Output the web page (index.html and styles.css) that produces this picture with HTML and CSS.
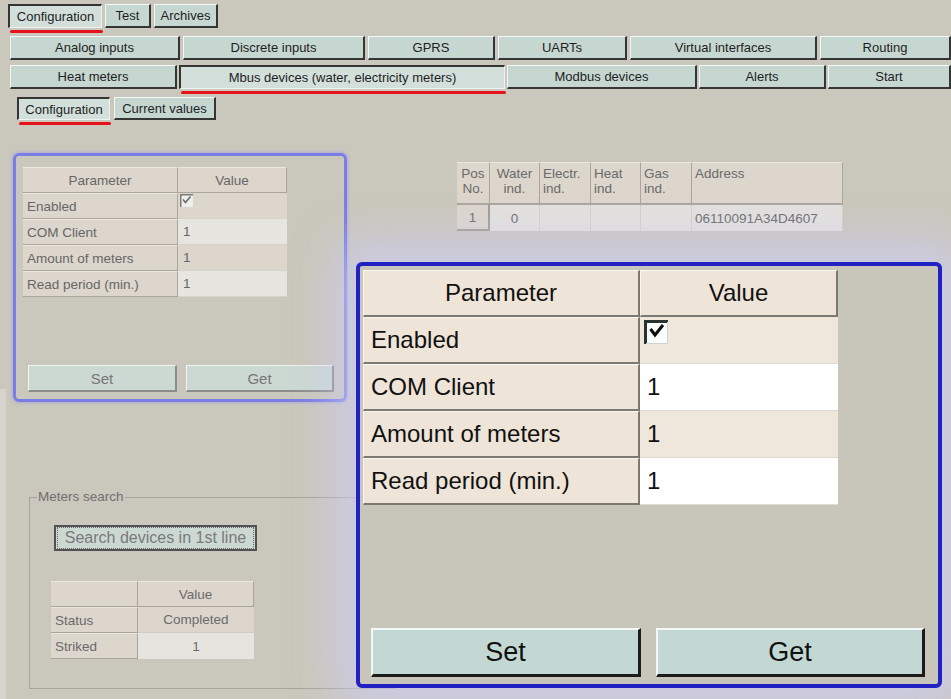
FILE: index.html
```html
<!DOCTYPE html>
<html lang="en">
<head>
<meta charset="utf-8">
<title>Mbus devices — Configuration</title>
<link rel="stylesheet" href="styles.css">
</head>
<body>
<div class="app">
  <nav class="tabs tabs-top">
    <div class="tab active">Configuration</div>
    <div class="tab">Test</div>
    <div class="tab">Archives</div>
  </nav>

  <nav class="nav nav-a">
    <div class="tab">Analog inputs</div>
    <div class="tab">Discrete inputs</div>
    <div class="tab">GPRS</div>
    <div class="tab">UARTs</div>
    <div class="tab">Virtual interfaces</div>
    <div class="tab">Routing</div>
  </nav>
  <nav class="nav nav-b">
    <div class="tab">Heat meters</div>
    <div class="tab active">Mbus devices (water, electricity meters)</div>
    <div class="tab">Modbus devices</div>
    <div class="tab">Alerts</div>
    <div class="tab">Start</div>
  </nav>

  <nav class="tabs tabs-sub">
    <div class="tab active">Configuration</div>
    <div class="tab">Current values</div>
  </nav>

  <main class="workspace">
    <div class="left-col">
      <section class="panel panel-mini">
        <table class="params params-mini">
          <colgroup><col class="c-key"><col class="c-val"></colgroup>
          <thead><tr><th>Parameter</th><th>Value</th></tr></thead>
          <tbody>
            <tr><td class="key">Enabled</td><td class="val beige top">
              <svg class="check check-mini" viewBox="0 0 13 13"><rect width="13" height="13" fill="#eeeeea"/><path d="M0.75 13V0.75H13" stroke="#7c7c78" stroke-width="1.5" fill="none"/><path d="M3 5.5l2.5 3 5-6" stroke="#6a6a6a" stroke-width="1.6" fill="none"/></svg>
            </td></tr>
            <tr><td class="key">COM Client</td><td class="val light">1</td></tr>
            <tr><td class="key">Amount of meters</td><td class="val beige">1</td></tr>
            <tr><td class="key">Read period (min.)</td><td class="val light">1</td></tr>
          </tbody>
        </table>
        <div class="actions actions-mini">
          <button class="btn-mini">Set</button>
          <button class="btn-mini">Get</button>
        </div>
      </section>

      <fieldset class="search">
        <legend>Meters search</legend>
        <button class="search-btn"><span>Search devices in 1st line</span></button>
        <table class="status">
          <colgroup><col class="s-key"><col class="s-val"></colgroup>
          <thead><tr><th></th><th>Value</th></tr></thead>
          <tbody>
            <tr><td class="key">Status</td><td class="val beige">Completed</td></tr>
            <tr><td class="key">Striked</td><td class="val light">1</td></tr>
          </tbody>
        </table>
      </fieldset>
    </div>

    <table class="meters">
      <colgroup>
        <col class="m-pos"><col class="m-w"><col class="m-e"><col class="m-h"><col class="m-g"><col class="m-addr">
      </colgroup>
      <thead>
        <tr>
          <th class="center">Pos<br>No.</th>
          <th class="center">Water<br>ind.</th>
          <th>Electr.<br>ind.</th>
          <th>Heat<br>ind.</th>
          <th>Gas<br>ind.</th>
          <th>Address</th>
        </tr>
      </thead>
      <tbody>
        <tr>
          <td class="rowhead">1</td>
          <td class="center">0</td>
          <td></td>
          <td></td>
          <td></td>
          <td>06110091A34D4607</td>
        </tr>
      </tbody>
    </table>

    <!-- enlarged view of the configuration block -->
    <section class="panel panel-zoom">
      <table class="params params-zoom">
        <colgroup><col class="z-key"><col class="z-val"></colgroup>
        <thead><tr><th>Parameter</th><th>Value</th></tr></thead>
        <tbody>
          <tr><td class="key">Enabled</td><td class="val beige top">
            <svg class="check check-zoom" viewBox="0 0 24 24"><rect width="24" height="24" fill="#fbfdfc"/><path d="M1.5 24V1.5H24" stroke="#28332f" stroke-width="3" fill="none"/><path d="M23.5 2v21.5H2" stroke="#c7d6d1" stroke-width="1" fill="none"/><path d="M6.5 9l4.5 6 8-10" stroke="#0d0d0d" stroke-width="3" fill="none"/></svg>
          </td></tr>
          <tr><td class="key">COM Client</td><td class="val white">1</td></tr>
          <tr><td class="key">Amount of meters</td><td class="val beige">1</td></tr>
          <tr><td class="key">Read period (min.)</td><td class="val white">1</td></tr>
        </tbody>
      </table>
      <div class="actions actions-zoom">
        <button class="btn-zoom">Set</button>
        <button class="btn-zoom">Get</button>
      </div>
    </section>
  </main>
</div>
</body>
</html>
```
FILE: styles.css
```css
html, body {
  margin: 0;
  padding: 0;
}

body {
  width: 951px;
  height: 699px;
  overflow: hidden;
  background-color: #cac7bc;
  /* pale window edge along the lower left */
  background-image: linear-gradient(#d6d4cc, #d6d4cc);
  background-size: 6px 310px;
  background-position: left bottom;
  background-repeat: no-repeat;
  font-family: "Liberation Sans", Arial, sans-serif;
  color: #222;
}

.app {
  padding-top: 4px;
}

/* ---------- tabs and navigation buttons ---------- */

.tab {
  position: relative;
  display: flex;
  align-items: center;
  justify-content: center;
  box-sizing: border-box;
  font-size: 13px;
  color: #1e1e1e;
  white-space: nowrap;
  background: #c6d7d1;
  border-style: solid;
  border-width: 1px 2px 2px 1px;
  border-color: #f3f7f5 #353535 #353535 #f3f7f5;
}

.tab.active {
  background: #d3dfdb;
  border-width: 2px 1px 1px 2px;
  border-color: #353535 #eef3f1 #eef3f1 #353535;
}

.tab.active::after {
  content: "";
  position: absolute;
  left: 0;
  right: -2px;
  bottom: -6px;
  height: 3px;
  border-radius: 2px;
  background: #e5121b;
}

.tabs {
  display: grid;
}

.tabs-top {
  grid-template-columns: 94px 46px 64px;
  gap: 3px;
  height: 24px;
  margin-left: 8px;
}

.nav {
  display: grid;
  height: 24px;
  margin-left: 10px;
}

.nav-a {
  margin-top: 8px;
  gap: 3px;
  grid-template-columns: 170px 182px 127px 129px 187px 1fr;
}

.nav-b {
  margin-top: 5px;
  gap: 2px;
  grid-template-columns: 167px 326px 190px 127px 1fr;
}

.tabs-sub {
  margin-top: 8px;
  margin-left: 17px;
  height: 23px;
  gap: 4px;
  grid-template-columns: 93px 102px;
}

/* ---------- workspace ---------- */

.workspace {
  position: relative;
  display: flex;
  align-items: flex-start;
  gap: 62px;
  margin-top: 5px;
  padding-left: 13px;
  height: 574px;
}

.left-col {
  display: flex;
  flex-direction: column;
  align-items: flex-start;
}

.panel {
  box-sizing: border-box;
  display: flex;
  flex-direction: column;
  border-style: solid;
  border-radius: 6px;
}

/* small configuration block */
.panel-mini {
  margin-top: 28px;
  width: 334px;
  height: 249px;
  border-width: 3px;
  border-color: #7a7de3;
  box-shadow: 0 0 3px 1px rgba(150, 152, 235, 0.55);
  padding: 11px 10px 7px 7px;
}

.params {
  border-collapse: separate;
  border-spacing: 0;
  table-layout: fixed;
}

.params th,
.params td {
  padding: 0;
  box-sizing: border-box;
  font-weight: normal;
  white-space: nowrap;
}

.params-mini {
  width: 264px;
  font-size: 13.5px;
  color: #666;
}

.params-mini .c-key { width: 155px; }
.params-mini .c-val { width: 109px; }

.params-mini tr { height: 26px; }

.params-mini th {
  background: #ddd6cc;
  text-align: center;
  border-top: 1px solid #ece7e0;
  border-right: 1px solid #aaa69e;
  border-bottom: 1px solid #aaa69e;
}

.params-mini td.key {
  background: #ddd6cc;
  padding-left: 4px;
  border-top: 1px solid #ece7e0;
  border-right: 1px solid #aaa69e;
  border-bottom: 1px solid #aaa69e;
}

.params-mini td.val {
  padding-left: 5px;
  border-bottom: 1px solid #d6d3cc;
}

.val.beige { background: #ddd6cc; }
.params-mini .val.light { background: #e6e5df; }

.val.top { vertical-align: top; }

.check { display: block; }

.check-mini {
  width: 13px;
  height: 13px;
  margin: 1px 0 0 -3px;
}

.actions {
  margin-top: auto;
  display: grid;
}

.actions-mini {
  grid-template-columns: 149px 148px;
  gap: 9px;
  padding-left: 5px;
  height: 27px;
}

button {
  font-family: inherit;
  padding: 0;
  margin: 0;
}

.btn-mini {
  box-sizing: border-box;
  background: #ccd8d2;
  color: #777;
  font-size: 15px;
  border-style: solid;
  border-width: 1px 2px 2px 1px;
  border-color: #eef4f1 #8c8c88 #8c8c88 #eef4f1;
}

/* meters search group */
.search {
  box-sizing: border-box;
  width: 366px;
  margin: 88px 0 0 16px;
  padding: 0 0 29px 0;
  border: 1px solid #a4a59c;
  min-width: 0;
}

.search legend {
  margin-left: 7px;
  padding: 0 1px;
  font-size: 13.5px;
  line-height: 14px;
  color: #707070;
}

.search-btn {
  display: block;
  box-sizing: border-box;
  width: 203px;
  height: 26px;
  margin: 21px 0 0 24px;
  background: #ccd8d2;
  border: 2px solid #525252;
  font-size: 16px;
  color: #7a7a7a;
}

.search-btn span {
  display: flex;
  align-items: center;
  justify-content: center;
  box-sizing: border-box;
  height: 100%;
  margin: 0 1px;
  border: 1px dotted #6a6a6a;
}

.status {
  width: 203px;
  margin: 30px 0 0 21px;
  border-collapse: separate;
  border-spacing: 0;
  table-layout: fixed;
  font-size: 13.5px;
  color: #6a6a6a;
}

.status .s-key { width: 87px; }
.status .s-val { width: 116px; }

.status tr { height: 26px; }

.status th,
.status td {
  padding: 0;
  box-sizing: border-box;
  font-weight: normal;
  text-align: center;
}

.status th,
.status td.key {
  background: #dcd6cc;
  border-top: 1px solid #ebe6df;
  border-right: 1px solid #a9a59d;
  border-bottom: 1px solid #a9a59d;
}

.status td.key {
  text-align: left;
  padding-left: 4px;
}

.status .val.beige { background: #dcd6cc; border-bottom: 1px solid #d0ccc4; }
.status .val.light { background: #e5e4de; }

/* device list */
.meters {
  margin-top: 37px;
  width: 386px;
  border-collapse: separate;
  border-spacing: 0;
  table-layout: fixed;
  font-size: 13.5px;
  color: #6a6a6a;
}

.meters .m-pos { width: 33px; }
.meters .m-w { width: 50px; }
.meters .m-e { width: 51px; }
.meters .m-h { width: 50px; }
.meters .m-g { width: 51px; }
.meters .m-addr { width: 151px; }

.meters th,
.meters td {
  padding: 0 0 0 3px;
  box-sizing: border-box;
  font-weight: normal;
  text-align: left;
}

.meters th {
  height: 43px;
  vertical-align: top;
  padding-top: 3px;
  line-height: 15px;
  background: #dcd6cc;
  border-top: 1px solid #ebe6df;
  border-right: 1px solid #aaa69e;
  border-bottom: 2px solid #aaa69e;
}

.meters th.center,
.meters td.center {
  text-align: center;
  padding-left: 0;
}

.meters td {
  height: 26px;
  background: #e3e1dd;
  border-right: 1px solid #d2cfc9;
}

.meters td.rowhead {
  text-align: center;
  padding-left: 0;
  background: #dcd6cc;
  border-right: 2px solid #9f9b93;
  border-bottom: 2px solid #9f9b93;
}

/* enlarged configuration block, drawn over the page */
.panel-zoom {
  position: absolute;
  z-index: 2;
  left: 356px;
  top: 137px;
  width: 586px;
  height: 426px;
  border-width: 4px;
  border-color: #2222c4;
  background: #c8c6ba;
  padding: 4px 0 7px 3px;
  box-shadow: 0 0 46px 20px rgba(205, 205, 245, 0.72);
}

.params-zoom {
  width: 475px;
  font-size: 24px;
  color: #111;
}

.params-zoom .z-key { width: 277px; }
.params-zoom .z-val { width: 198px; }

.params-zoom tr { height: 47px; }

.params-zoom th {
  text-align: center;
  background: #efe4d8;
  border-top: 1px solid #fbf6f0;
  border-left: 1px solid #fbf6f0;
  border-right: 2px solid #7c7973;
  border-bottom: 2px solid #7c7973;
}

.params-zoom td.key {
  background: #efe4d8;
  padding-left: 7px;
  border-top: 1px solid #fbf6f0;
  border-left: 1px solid #fbf6f0;
  border-right: 2px solid #7c7973;
  border-bottom: 2px solid #7c7973;
}

.params-zoom td.val {
  padding-left: 7px;
  border-bottom: 1px solid #dedad4;
}

.params-zoom .val.beige { background: #efe6dc; }
.params-zoom .val.white { background: #ffffff; }

.check-zoom {
  width: 24px;
  height: 24px;
  margin: 3px 0 0 -3px;
}

.actions-zoom {
  grid-template-columns: 270px 269px;
  gap: 15px;
  padding-left: 8px;
  height: 49px;
}

.btn-zoom {
  box-sizing: border-box;
  background: #c3d8d2;
  color: #111;
  font-size: 27px;
  border-style: solid;
  border-width: 2px 3px 3px 2px;
  border-color: #f1f8f5 #1c1c1c #1c1c1c #f1f8f5;
}
```
